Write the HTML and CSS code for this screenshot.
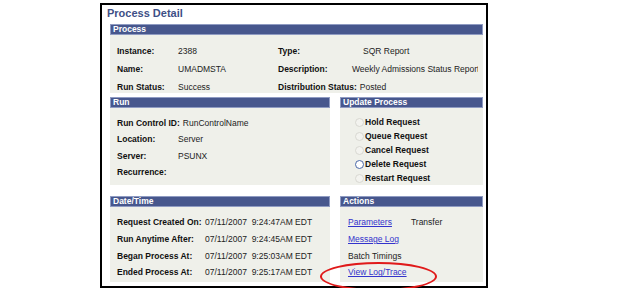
FILE: index.html
```html
<!DOCTYPE html>
<html lang="en">
<head>
    <meta charset="UTF-8">
    <title>Process Detail</title>
    <link rel="stylesheet" href="styles.css">
</head>
<body>
<div class="frame">
    <div class="title">Process Detail</div>

    <div class="box">
        <div class="bar">Process</div>
        <div class="panel panel-process">
            <div class="pair"><span class="lbl w61">Instance:</span><span>2388</span></div>
            <div class="pair"><span class="lbl w85">Type:</span><span>SQR Report</span></div>
            <div class="pair"><span class="lbl w61">Name:</span><span>UMADMSTA</span></div>
            <div class="pair clip"><span class="lbl w74">Description:</span><span>Weekly Admissions Status Report</span></div>
            <div class="pair"><span class="lbl w61">Run Status:</span><span>Success</span></div>
            <div class="pair"><span class="lbl w74">Distribution Status:</span><span>Posted</span></div>
        </div>
    </div>

    <div class="cols">
        <div class="col col-left">
            <div class="box">
                <div class="bar">Run</div>
                <div class="panel panel-run">
                    <div class="pair"><span class="lbl w51">Run Control ID:</span><span>RunControlName</span></div>
                    <div class="pair"><span class="lbl w61">Location:</span><span>Server</span></div>
                    <div class="pair"><span class="lbl w61">Server:</span><span>PSUNX</span></div>
                    <div class="pair"><span class="lbl w61">Recurrence:</span><span></span></div>
                </div>
            </div>
            <div class="box">
                <div class="bar">Date/Time</div>
                <div class="panel panel-date">
                    <div class="pair"><span class="lbl w88">Request Created On:</span><span>07/11/2007&nbsp;&nbsp;9:24:47AM EDT</span></div>
                    <div class="pair"><span class="lbl w88">Run Anytime After:</span><span>07/11/2007&nbsp;&nbsp;9:24:45AM EDT</span></div>
                    <div class="pair"><span class="lbl w88">Began Process At:</span><span>07/11/2007&nbsp;&nbsp;9:25:03AM EDT</span></div>
                    <div class="pair"><span class="lbl w88">Ended Process At:</span><span>07/11/2007&nbsp;&nbsp;9:25:17AM EDT</span></div>
                </div>
            </div>
        </div>

        <div class="col col-right">
            <div class="box">
                <div class="bar">Update Process</div>
                <div class="panel panel-update">
                    <div class="radio-row"><span class="radio"></span>Hold Request</div>
                    <div class="radio-row"><span class="radio"></span>Queue Request</div>
                    <div class="radio-row"><span class="radio"></span>Cancel Request</div>
                    <div class="radio-row"><span class="radio radio-on"></span>Delete Request</div>
                    <div class="radio-row"><span class="radio"></span>Restart Request</div>
                </div>
            </div>
            <div class="box box-actions">
                <div class="bar">Actions</div>
                <div class="panel panel-actions">
                    <div class="act"><a href="#">Parameters</a><span class="transfer">Transfer</span></div>
                    <div class="act"><a href="#">Message Log</a></div>
                    <div class="act">Batch Timings</div>
                    <div class="act"><a href="#">View Log/Trace</a></div>
                </div>
                <div class="ring"></div>
            </div>
        </div>
    </div>
</div>
</body>
</html>
```

FILE: styles.css
```css
body {
    margin: 0;
    background: #ffffff;
    font-family: "Liberation Sans", Arial, sans-serif;
    font-size: 8.5px;
    color: #222222;
}
.frame {
    margin: 3px 0 0 100px;
    width: 388px;
    height: 285px;
    border: 2px solid #000000;
    padding: 0 3px 0 8px;
    box-sizing: border-box;
}
.title {
    height: 19px;
    line-height: 16px;
    margin-left: -3px;
    font-size: 11px;
    font-weight: bold;
    color: #3e4f86;
}
.bar {
    height: 11px;
    line-height: 9px;
    padding-left: 2px;
    background-color: #47578d;
    border: 1px solid #8f9bc2;
    box-sizing: border-box;
    color: #ffffff;
    font-weight: bold;
    font-size: 8.5px;
}
.panel {
    background-color: #eff0ea;
    padding-left: 7px;
    box-sizing: border-box;
}
.panel-process {
    display: grid;
    grid-template-columns: 161px 1fr;
    grid-auto-rows: 18px;
    padding-top: 7px;
    height: 58px;
}
.pair {
    display: flex;
    align-items: center;
    white-space: nowrap;
}
.clip {
    overflow: hidden;
    margin-right: 5px;
}
.lbl {
    font-weight: bold;
    color: #111111;
    flex: none;
    padding-right: 3px;
    box-sizing: border-box;
}
.w51 { min-width: 51px; }
.w61 { min-width: 61px; }
.w74 { min-width: 74px; }
.w85 { min-width: 85px; }
.w88 { min-width: 88px; }

.cols {
    display: flex;
    gap: 10px;
    margin-top: 4px;
}
.col {
    display: flex;
    flex-direction: column;
    gap: 11px;
}
.col-left { width: 220px; }
.col-right { width: 143px; }

.panel-run {
    height: 77px;
    padding-top: 7px;
}
.panel-run .pair {
    height: 16.3px;
}
.panel-date {
    height: 75px;
    padding-top: 7px;
}
.panel-date .pair {
    height: 16.7px;
}

.panel-update {
    height: 77px;
    padding: 7px 0 0 15px;
}
.radio-row {
    display: flex;
    align-items: center;
    height: 14px;
    font-weight: bold;
    color: #111111;
}
.radio {
    width: 9px;
    height: 9px;
    border-radius: 50%;
    border: 1px solid #d8d8d2;
    background: #f3f3ef;
    margin-right: 1px;
    box-sizing: border-box;
    flex: none;
}
.radio-on {
    border-color: #4a68a8;
    background: #ffffff;
}

.box-actions {
    position: relative;
}
.panel-actions {
    height: 75px;
    padding: 7px 0 0 8px;
}
.act {
    height: 16.7px;
    display: flex;
    align-items: center;
}
.act a {
    color: #3333cc;
    text-decoration: underline;
}
.transfer {
    margin-left: 19px;
}
.ring {
    position: absolute;
    left: -20px;
    top: 66px;
    width: 117px;
    height: 29px;
    border: 2px solid #e01a1a;
    border-radius: 50%;
    box-sizing: border-box;
}
```
